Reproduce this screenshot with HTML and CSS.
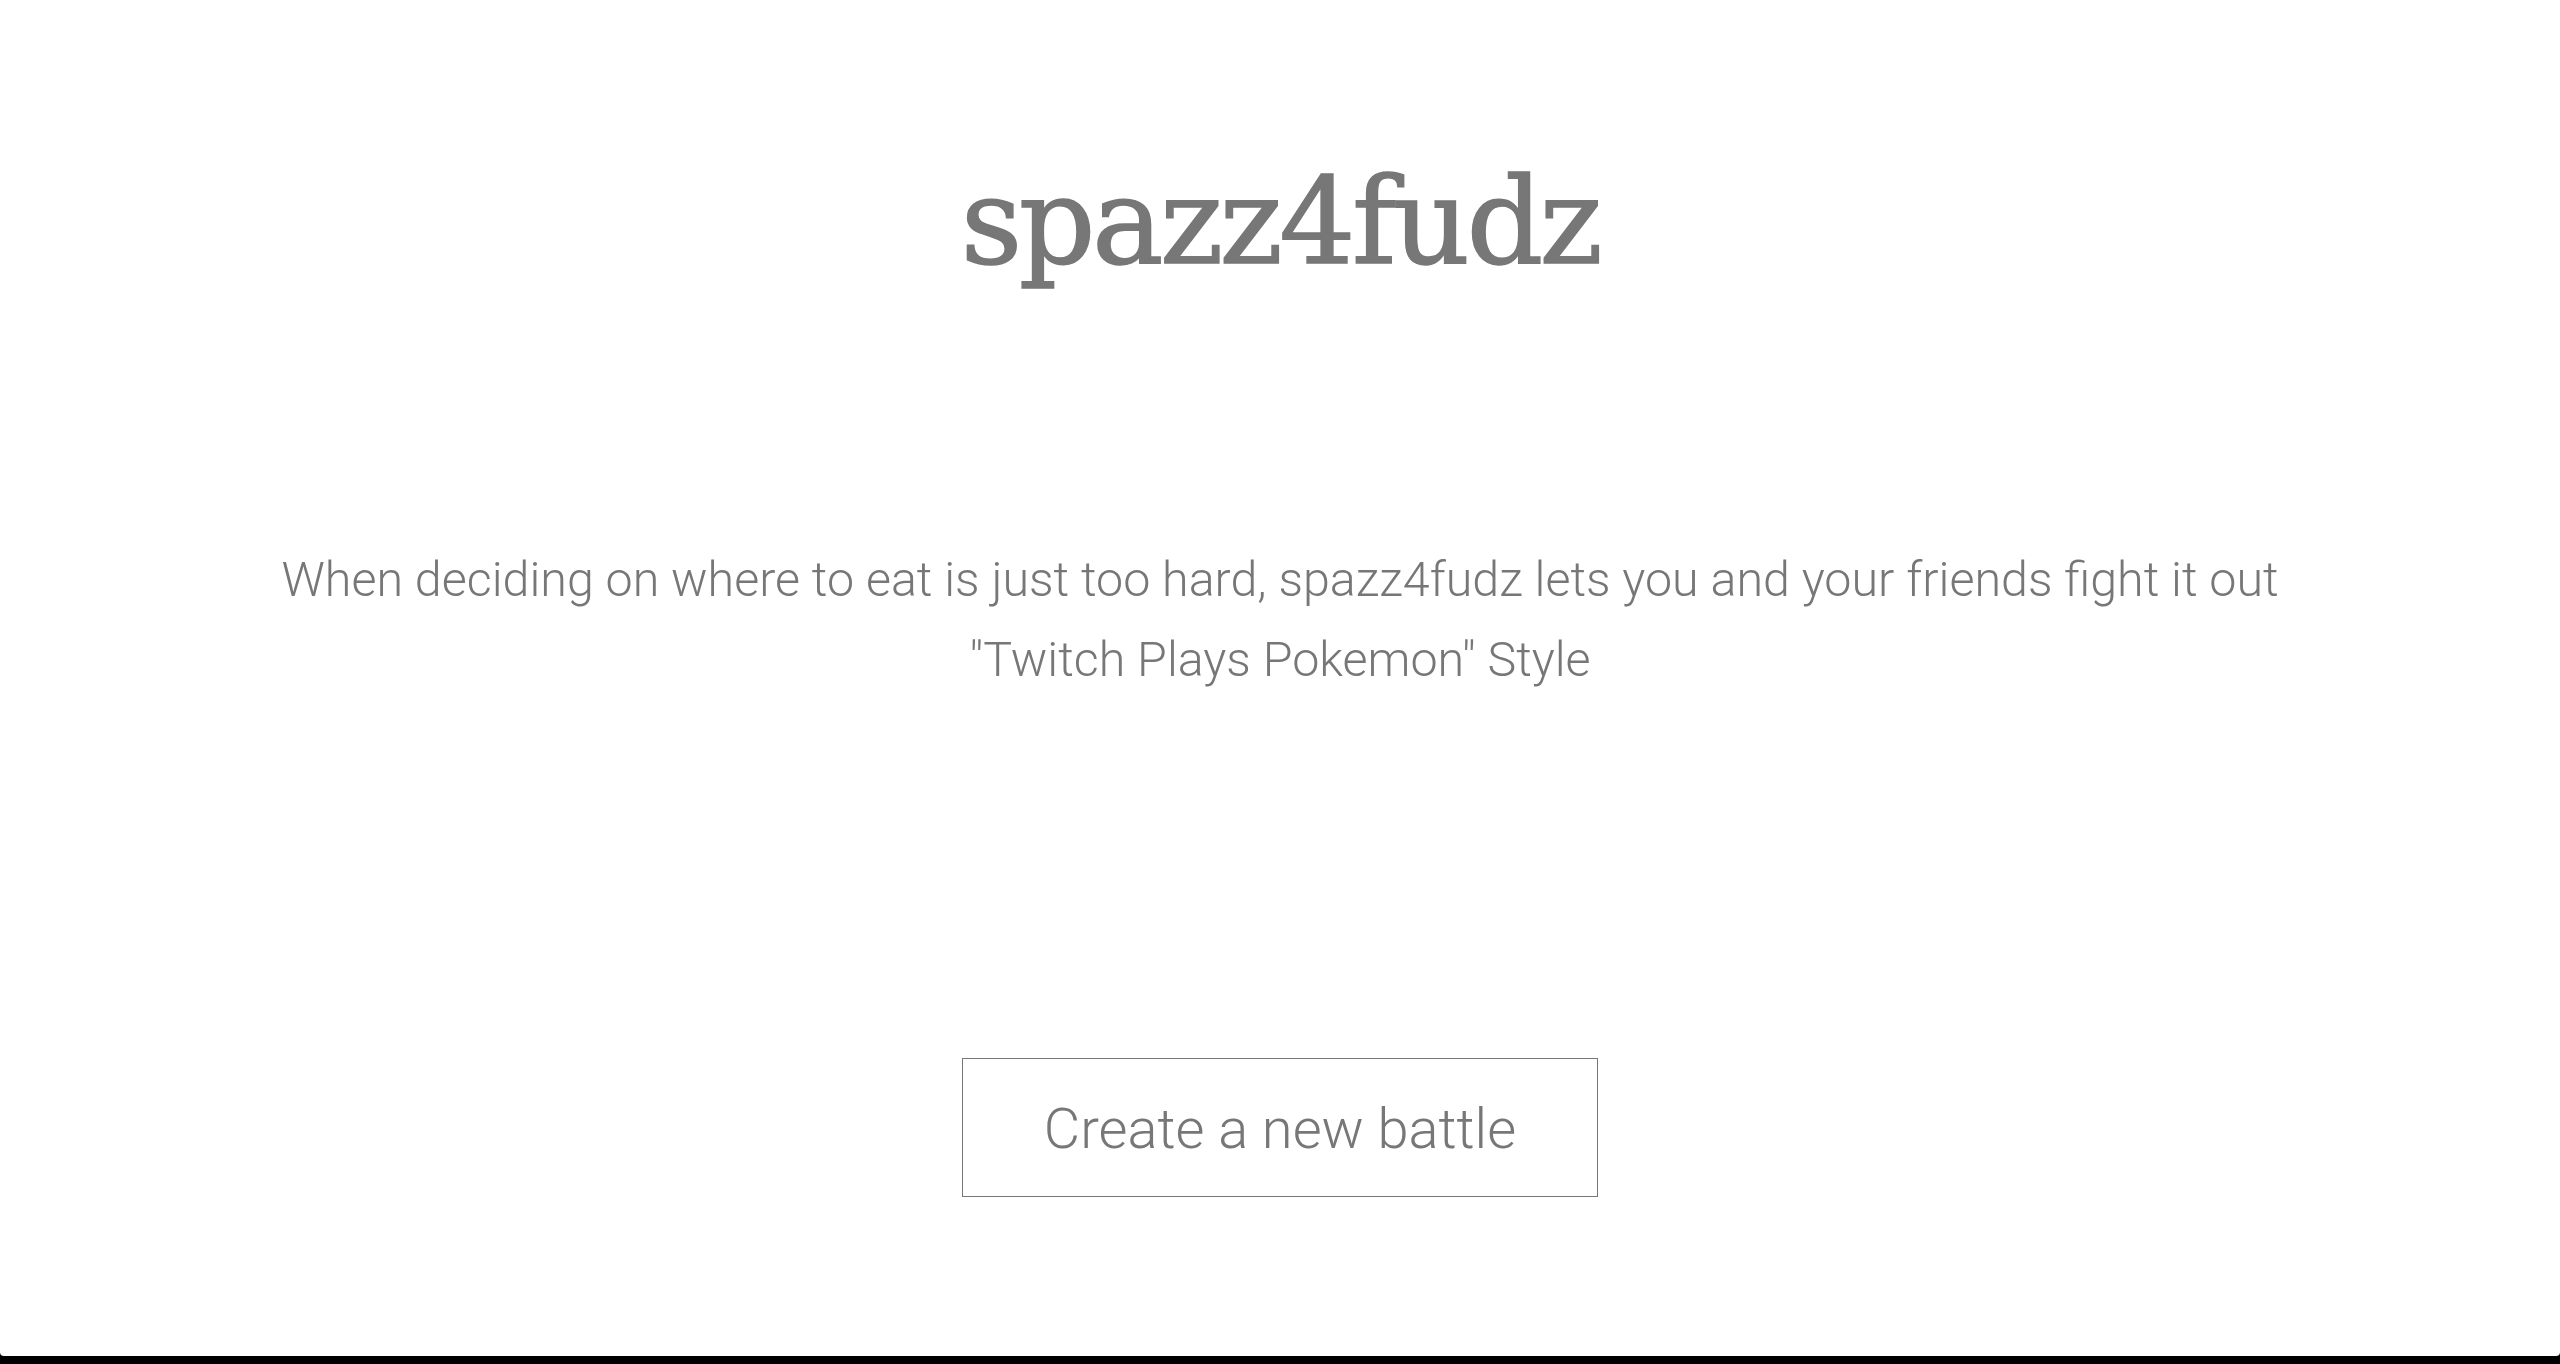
FILE: index.html
```html
<!DOCTYPE html>
<html>
<head>
<meta charset="utf-8">
<title>spazz4fudz</title>
<link rel="stylesheet" href="styles.css">
</head>
<body>
<div class="page">
  <h1 class="title">spazz4fudz</h1>
  <p class="tagline">When deciding on where to eat is just too hard, spazz4fudz lets you and your friends fight it out<br>"Twitch Plays Pokemon" Style</p>
  <div class="actions"><a class="btn" href="#">Create a new battle</a></div>
</div>
</body>
</html>
```

FILE: styles.css
```css
html, body {
  margin: 0;
  padding: 0;
  background: #000;
}
.page {
  height: 1356px;
  background: #fff;
  border-radius: 0 0 4px 4px;
  text-align: center;
  color: #777;
  display: flex;
  flex-direction: column;
  align-items: center;
  padding-top: 162px;
  box-sizing: border-box;
}
.title {
  margin: 0;
  font-family: "DejaVu Serif", serif;
  font-weight: normal;
  font-size: 120px;
  line-height: 120px;
  letter-spacing: -3.6px;
  color: #777;
  -webkit-text-stroke: 1.5px #777;
}
.tagline {
  margin: 258px 0 0;
  font-family: Roboto, "Liberation Sans", sans-serif;
  font-weight: 300;
  font-size: 48.4px;
  line-height: 80px;
  color: #777;
}
.actions {
  margin-top: 358px;
}
.btn {
  display: inline-block;
  border: 1px solid #777;
  padding: 37px 81px 34px;
  font-family: Roboto, "Liberation Sans", sans-serif;
  font-weight: 300;
  font-size: 56px;
  line-height: 66px;
  color: #777;
  text-decoration: none;
}
```
